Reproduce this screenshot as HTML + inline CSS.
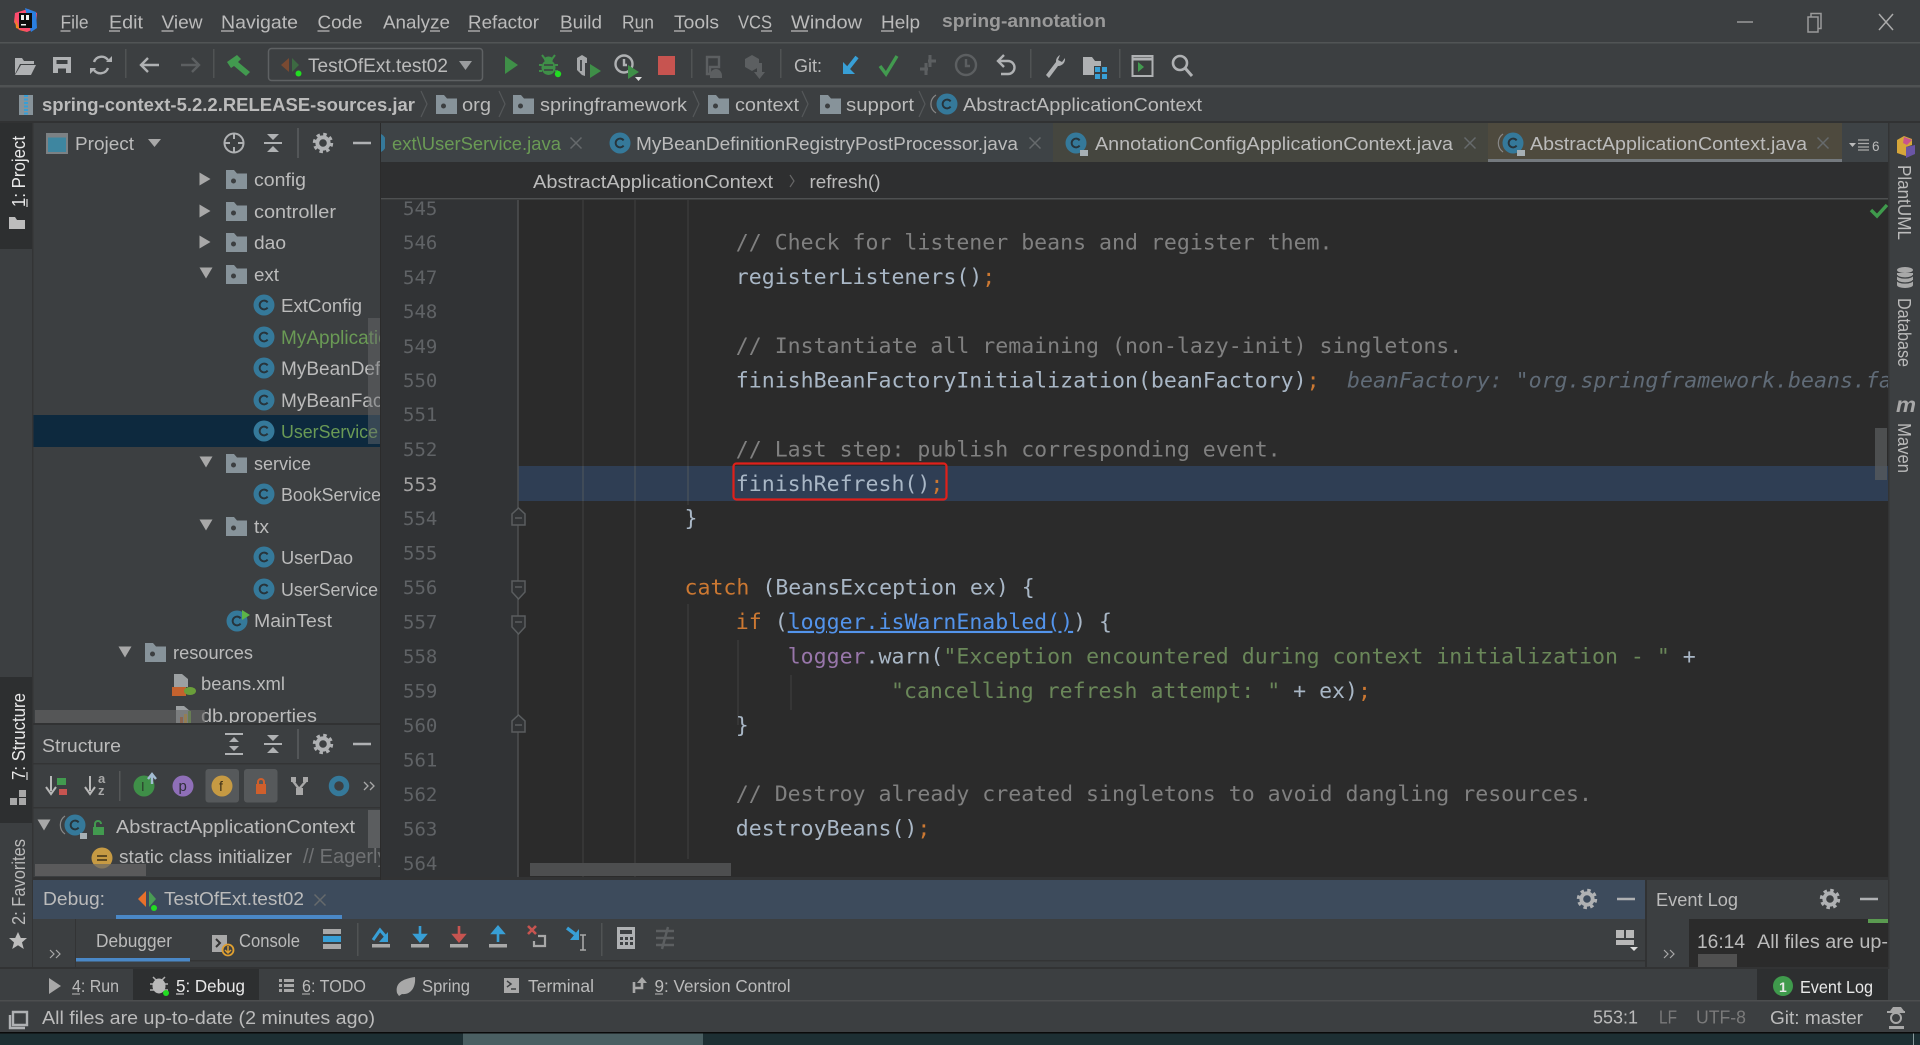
<!DOCTYPE html>
<html><head><meta charset="utf-8"><title>spring-annotation</title>
<style>
html,body{margin:0;padding:0;background:#3c3f41;overflow:hidden}
svg{display:block}
text{font-family:"Liberation Sans",sans-serif;font-size:18.5px;fill:#bbbbbb;white-space:pre}
.b{font-weight:bold}
.g{fill:#6a9a55}
.w{fill:#e8e8e8}
.d{fill:#7a7a7a}
.m{font-family:"DejaVu Sans Mono",monospace;font-size:21.55px;fill:#a9b7c6}
.n{font-family:"DejaVu Sans Mono",monospace;font-size:19px;fill:#606366}
.c{fill:#808080}.k{fill:#cc7832}.s{fill:#6a8759}.p{fill:#9876aa}.l{fill:#5394ec;text-decoration:underline}
.h{font-style:italic;fill:#606b77}
.ic{fill:none;stroke:#afb1b3;stroke-width:2.4}
.dim{fill:none;stroke:#5c5f61;stroke-width:2.4}
</style></head>
<body>
<svg xmlns="http://www.w3.org/2000/svg" width="1920" height="1045" viewBox="0 0 1920 1045">
<defs>
<g id="cls"><circle r="10.5" fill="#35799a"/><path d="M3.6-2.6A4.4 4.4 0 1 0 3.6 2.6" fill="none" stroke="#27343b" stroke-width="1.9"/></g>
<g id="fld"><path d="M-11-10h8l3 3.500h10v15.500h-21z" fill="#87939a"/><circle cx="-3.500" cy="1" r="2.500" fill="#3c3f41"/></g>
<g id="gear"><circle r="8.500" fill="none" stroke="#afb1b3" stroke-width="3.400" stroke-dasharray="3.400 3.270"/><circle r="5.700" fill="none" stroke="#afb1b3" stroke-width="3.800"/></g>
<path id="min" d="M-9 0h18" stroke="#afb1b3" stroke-width="2.400"/>
<g id="coll"><path d="M-9 0h18" stroke="#afb1b3" stroke-width="2"/><path d="M-6-9h12l-6 6zM-6 9h12l-6-6z" fill="#afb1b3"/></g>
<path id="x" d="M-5.500-5.500l11 11M5.500-5.500l-11 11" stroke="#666a6c" stroke-width="1.500" fill="none"/>
<path id="triR" d="M-5.500-6.500l11 6.500-11 6.500z" fill="#a8a8a8"/>
<path id="triD" d="M-6.500-5.500h13l-6.500 11z" fill="#a8a8a8"/>
<path id="chev" d="M-3-13l6 13-6 13" fill="none" stroke="#55585a" stroke-width="1.200"/>
</defs>

<rect width="1920" height="1045" fill="#3c3f41"/>

<!-- Title bar -->
<path d="M15 13l13-4 9 4-1 15-9 4-8-2-5-8z" fill="#fb4b6e"/><path d="M25 8l11 4 1 16-6 4z" fill="#2a7fe0"/><path d="M15 18l5 12 8 2-12-4z" fill="#f0861c"/>
<rect x="19" y="13" width="13" height="15" fill="#0c0c0c"/><path d="M21 15h3v5h-3zM26 15h3v5h-3zM21 24h5v1.500h-5z" fill="#f0f0f0"/>
<text x="60.500" y="28.500" textLength="28" lengthAdjust="spacingAndGlyphs">File</text>
<text x="109" y="28.500" textLength="34" lengthAdjust="spacingAndGlyphs">Edit</text>
<text x="161.500" y="28.500" textLength="41" lengthAdjust="spacingAndGlyphs">View</text>
<text x="221" y="28.500" textLength="77" lengthAdjust="spacingAndGlyphs">Navigate</text>
<text x="317.500" y="28.500" textLength="45" lengthAdjust="spacingAndGlyphs">Code</text>
<text x="383" y="28.500" textLength="67" lengthAdjust="spacingAndGlyphs">Analyze</text>
<text x="468" y="28.500" textLength="71" lengthAdjust="spacingAndGlyphs">Refactor</text>
<text x="560" y="28.500" textLength="42" lengthAdjust="spacingAndGlyphs">Build</text>
<text x="622" y="28.500" textLength="32" lengthAdjust="spacingAndGlyphs">Run</text>
<text x="674" y="28.500" textLength="45" lengthAdjust="spacingAndGlyphs">Tools</text>
<text x="738" y="28.500" textLength="34" lengthAdjust="spacingAndGlyphs">VCS</text>
<text x="791" y="28.500" textLength="71" lengthAdjust="spacingAndGlyphs">Window</text>
<text x="881" y="28.500" textLength="39" lengthAdjust="spacingAndGlyphs">Help</text>
<path d="M60.500 31h10M109 31h11M161.500 31h12M221 31h13M317.500 31h12M430 31h10M468 31h12M560 31h12M634 31h9M674 31h11M761 31h11M791 31h17M881 31h13" stroke="#bbb" stroke-width="1.200"/>
<text class="b" x="942" y="27" textLength="164" lengthAdjust="spacingAndGlyphs" style="fill:#9a9a9a">spring-annotation</text>
<path d="M1737 22h16" stroke="#9a9a9a" stroke-width="1.500"/>
<path d="M1808 17h10v15h-10zM1811 17v-3.500h10v15h-3" fill="none" stroke="#9a9a9a" stroke-width="1.500"/>
<path d="M1879 14l14 16M1893 14l-14 16" stroke="#aaa" stroke-width="1.500"/>
<rect y="42" width="1920" height="1.500" fill="#515455"/>

<!-- Toolbar -->
<path d="M15 58h7l2 3h10v3H20l-5 10zM21 65h15l-5 10H15z" fill="#afb1b3"/>
<path d="M53 57h18v16H53z" fill="#afb1b3"/><path d="M56.500 60h11v4h-11zM58 68.500h8v4.500h-8z" fill="#3c3f41"/>
<path d="M94 62a8 8 0 0 1 14-2M108 68a8 8 0 0 1-14 2" class="ic" stroke-width="3"/><path d="M106 62h6v-6zM96 68h-6v6z" fill="#afb1b3"/>
<rect x="125" y="49" width="1.500" height="29" fill="#505354"/>
<path d="M141 65h18M148 58l-7 7 7 7" class="ic" stroke-width="2.600"/>
<path d="M181 65h18M192 58l7 7-7 7" class="dim" stroke-width="2.600"/>
<rect x="213" y="49" width="1.500" height="29" fill="#505354"/>
<path d="M227 62l10-7 4 4-3 3 12 10-4 4-12-10-3 2z" fill="#429a4f"/>
<rect x="268.500" y="48.500" width="214" height="32" rx="3" fill="#3c3f41" stroke="#5e6163" stroke-width="1.500"/>
<path d="M289 58v14l-8-7z" fill="#794a32"/><path d="M292 58v14l7-7z" fill="#3d6a42"/><circle cx="298.500" cy="73.500" r="3" fill="#22dd22"/>
<text x="308" y="72" textLength="140" lengthAdjust="spacingAndGlyphs" style="font-size:19.500px">TestOfExt.test02</text>
<path d="M459 61h13l-6.500 9z" fill="#9a9c9e"/>
<path d="M505 56l13 9-13 9z" fill="#3f8f48"/>
<path d="M542 55l3 4M555 55l-3 4M539 65h3M555 65h3M539 71h3M555 71h3" stroke="#3f8f48" stroke-width="2" fill="none"/><ellipse cx="548.500" cy="59.500" rx="4.500" ry="3" fill="#3f8f48"/><ellipse cx="548.500" cy="67.500" rx="7" ry="7.500" fill="#3f8f48"/><path d="M544 65h9M544 70h9" stroke="#3c3f41" stroke-width="1.400"/><circle cx="558" cy="74" r="3.200" fill="#22dd22"/>
<path d="M577 58l5-3 5 3v5h-2v13l-3-1-5-5z" fill="#a6a8aa"/><path d="M581 60v11" stroke="#3c3f41" stroke-width="1.800"/><path d="M590 64l11 7-11 7z" fill="#3f8f48"/>
<circle cx="624" cy="64" r="8.500" class="ic"/><path d="M624 59v6h3" class="ic" stroke-width="1.600"/><path d="M628 65l11 7-11 7z" fill="#3f8f48"/><path d="M635 77h7l-3.500 4z" fill="#ddd"/>
<rect x="658" y="56" width="17" height="19" fill="#c75450"/>
<rect x="691" y="49" width="1.500" height="29" fill="#505354"/>
<path d="M707 57h12v10h-9v7h-3z" class="dim" stroke-width="2"/><path d="M710 76a6 7 0 0 1 12 0v2h-12z" fill="#5c5f61"/>
<path d="M745 59l7-4 7 4v8l-7 4-7-4z" fill="#5c5f61"/><path d="M757 63h5v9h3l-5.500 7-5.500-7h3z" fill="#5c5f61"/>
<rect x="780" y="49" width="1.500" height="29" fill="#505354"/>
<text x="794" y="72" textLength="28" lengthAdjust="spacingAndGlyphs">Git:</text>
<path d="M857 57L846 71" stroke="#389fd6" stroke-width="4"/><path d="M843 62v12h12z" fill="#389fd6"/>
<path d="M880 66l6 8 11-18" fill="none" stroke="#429a4f" stroke-width="3.400"/>
<path d="M920 69h8M926 63v12M936 61h-8M930 55v12" stroke="#5c5f61" stroke-width="3" fill="none"/>
<circle cx="966" cy="65" r="10" class="dim"/><path d="M966 59v7h4" class="dim" stroke-width="2"/>
<path d="M999 61h9a6.500 6.500 0 0 1 0 13h-7M1004 55l-6 6 6 6" class="ic" stroke-width="2.600"/>
<rect x="1030" y="49" width="1.500" height="29" fill="#505354"/>
<path d="M1046 75l10-13a7 7 0 0 1 4-7l-2 5 4 2 3-4a7 7 0 0 1-7 8l-9 12z" fill="#afb1b3"/>
<path d="M1083 57h9l3 4h6v5h-7v9h-11z" fill="#afb1b3"/><path d="M1095 67h5v5h-5zM1102 67h5v5h-5zM1095 74h5v5h-5zM1102 74h5v5h-5z" fill="#389fd6"/>
<rect x="1119" y="49" width="1.500" height="29" fill="#505354"/>
<rect x="1132.500" y="56" width="20" height="20" fill="#3a3d3e" stroke="#afb1b3" stroke-width="2"/><path d="M1133 59h19" stroke="#afb1b3" stroke-width="3"/><path d="M1138 62l6 5-6 5z" fill="#429a4f"/>
<circle cx="1180" cy="63" r="7" fill="none" stroke="#afb1b3" stroke-width="2.600"/><path d="M1185 68l7 8" stroke="#afb1b3" stroke-width="3"/>
<rect y="85" width="1920" height="2.500" fill="#4f5253"/>

<!-- Nav bar -->
<rect x="19" y="95" width="14" height="20" fill="#87939a"/><path d="M26 95v20" stroke="#389fd6" stroke-width="4" stroke-dasharray="2 1.500"/>
<text class="b" x="42" y="111" textLength="373" lengthAdjust="spacingAndGlyphs">spring-context-5.2.2.RELEASE-sources.jar</text>
<use href="#chev" x="424" y="104"/>
<use href="#fld" x="447" y="105"/><text x="462" y="111" textLength="29" lengthAdjust="spacingAndGlyphs">org</text>
<use href="#chev" x="502" y="104"/>
<use href="#fld" x="524" y="105"/><text x="540" y="111" textLength="147" lengthAdjust="spacingAndGlyphs">springframework</text>
<use href="#chev" x="696" y="104"/>
<use href="#fld" x="719" y="105"/><text x="735" y="111" textLength="64" lengthAdjust="spacingAndGlyphs">context</text>
<use href="#chev" x="805" y="104"/>
<use href="#fld" x="831" y="105"/><text x="846" y="111" textLength="68" lengthAdjust="spacingAndGlyphs">support</text>
<use href="#chev" x="922" y="104"/>
<use href="#cls" x="947" y="104"/><path d="M936 95a12 11 0 0 0 0 18" fill="none" stroke="#888" stroke-width="1.200"/>
<text x="963" y="111" textLength="239" lengthAdjust="spacingAndGlyphs">AbstractApplicationContext</text>
<rect y="121" width="1920" height="2.500" fill="#313233"/>

<!-- Project panel -->
<rect x="33" y="123" width="348" height="602" fill="#3c3f41"/>
<rect x="47" y="134" width="20" height="19" fill="#3e86a0" stroke="#7c8184" stroke-width="2"/><path d="M47 136h20" stroke="#7c8184" stroke-width="3"/>
<text x="75" y="150" textLength="59" lengthAdjust="spacingAndGlyphs">Project</text>
<path d="M148 139h13l-6.500 8z" fill="#a8a8a8"/>
<circle cx="234" cy="143" r="9.500" fill="none" stroke="#afb1b3" stroke-width="2"/><path d="M224 143h6M238 143h6M234 133v6M234 147v6" stroke="#afb1b3" stroke-width="2"/>
<use href="#coll" x="273" y="143"/><rect x="297" y="128" width="2" height="30" fill="#535658"/>
<use href="#gear" x="323" y="143"/><use href="#min" x="362" y="143"/>

<rect x="33" y="415" width="347" height="32" fill="#0d293e"/>

<use href="#triR" x="205" y="179"/><use href="#fld" x="237" y="180"/><text x="254" y="186" textLength="52" lengthAdjust="spacingAndGlyphs">config</text>
<use href="#triR" x="205" y="211"/><use href="#fld" x="237" y="212"/><text x="254" y="218" textLength="82" lengthAdjust="spacingAndGlyphs">controller</text>
<use href="#triR" x="205" y="242"/><use href="#fld" x="237" y="243"/><text x="254" y="249" textLength="32" lengthAdjust="spacingAndGlyphs">dao</text>
<use href="#triD" x="206" y="273"/><use href="#fld" x="237" y="275"/><text x="254" y="281" textLength="25" lengthAdjust="spacingAndGlyphs">ext</text>
<use href="#cls" x="264" y="305"/><text x="281" y="312" textLength="81" lengthAdjust="spacingAndGlyphs">ExtConfig</text>
<use href="#cls" x="264" y="337"/><text class="g" x="281" y="344" style="font-size:19px">MyApplicationContext</text>
<use href="#cls" x="264" y="368"/><text x="281" y="375" style="font-size:19px">MyBeanDefinitionReg</text>
<use href="#cls" x="264" y="400"/><text x="281" y="407" style="font-size:19px">MyBeanFactoryPostPr</text>
<use href="#cls" x="264" y="431"/><text class="g" x="281" y="438" textLength="97" lengthAdjust="spacingAndGlyphs">UserService</text>
<use href="#triD" x="206" y="462"/><use href="#fld" x="237" y="464"/><text x="254" y="470" textLength="57" lengthAdjust="spacingAndGlyphs">service</text>
<use href="#cls" x="264" y="494"/><text x="281" y="501" textLength="100" lengthAdjust="spacingAndGlyphs">BookService</text>
<use href="#triD" x="206" y="525"/><use href="#fld" x="237" y="527"/><text x="254" y="533" textLength="15" lengthAdjust="spacingAndGlyphs">tx</text>
<use href="#cls" x="264" y="557"/><text x="281" y="564" textLength="72" lengthAdjust="spacingAndGlyphs">UserDao</text>
<use href="#cls" x="264" y="589"/><text x="281" y="596" textLength="97" lengthAdjust="spacingAndGlyphs">UserService</text>
<use href="#cls" x="237" y="621"/><path d="M242 610l8 5-8 5z" fill="#5cb547"/><text x="254" y="627" textLength="78" lengthAdjust="spacingAndGlyphs">MainTest</text>
<use href="#triD" x="125" y="652"/><use href="#fld" x="156" y="653"/><text x="173" y="659" textLength="80" lengthAdjust="spacingAndGlyphs">resources</text>
<path d="M174 674h8l6 5v8h-14z" fill="#9ca0a2"/><rect x="172" y="687" width="14" height="9" fill="#c4622e"/><ellipse cx="190" cy="691" rx="6" ry="4" fill="#6a9e3a"/>
<text x="201" y="690" textLength="84" lengthAdjust="spacingAndGlyphs">beans.xml</text>
<path d="M176 706h8l6 5v13h-14z" fill="#9ca0a2"/><path d="M180 717h3v7h-3z" fill="#c4622e"/><path d="M184 714h3v10h-3z" fill="#d9a43a"/><path d="M188 711h3v13h-3z" fill="#6a9e3a"/>
<text x="201" y="722" textLength="116" lengthAdjust="spacingAndGlyphs">db.properties</text>
<rect x="368" y="318" width="12" height="126" fill="#6b6d6e" fill-opacity=".45"/>
<rect x="35" y="710" width="170" height="13" fill="#666" fill-opacity=".6"/>

<!-- Structure panel -->
<rect x="33" y="723" width="348" height="155" fill="#3c3f41"/>
<rect x="33" y="723" width="348" height="2" fill="#313233"/>
<text x="42" y="752" textLength="79" lengthAdjust="spacingAndGlyphs">Structure</text>
<path d="M225 734h18M225 754h18" stroke="#afb1b3" stroke-width="2"/><path d="M229 742l5-5 5 5zM229 746l5 5 5-5z" fill="#afb1b3"/>
<use href="#coll" x="273" y="744"/><rect x="297" y="729" width="2" height="30" fill="#535658"/>
<use href="#gear" x="323" y="744"/><use href="#min" x="362" y="744"/>
<rect x="33" y="763" width="348" height="1.500" fill="#333435"/>
<path d="M51 776v15M46 787l5 7 5-7" stroke="#b8b8b8" stroke-width="2" fill="none"/><path d="M57 778h9v7h-9z" fill="#429a4f"/><rect x="59" y="789" width="8" height="6" fill="#c75450"/>
<path d="M90 776v15M85 787l5 7 5-7" stroke="#b8b8b8" stroke-width="2" fill="none"/>
<text x="98" y="783" style="font-size:13px;font-weight:bold;fill:#a8a8a8">a</text><text x="98" y="795" style="font-size:13px;font-weight:bold;fill:#a8a8a8">z</text>
<rect x="119" y="771" width="1.500" height="30" fill="#555758"/>
<circle cx="144" cy="786" r="10.500" fill="#3f8f48"/><text x="141" y="791" style="font-size:13px;fill:#2b3a2b">I</text><path d="M152 784v-9M148 779l4-5 4 5" stroke="#a3bcd2" stroke-width="2.400" fill="none"/>
<circle cx="183" cy="786" r="10.500" fill="#8f6fb8"/><text x="178.500" y="791" style="font-size:15px;fill:#2f2f3a">p</text>
<rect x="205.500" y="769" width="33.500" height="33.500" rx="3" fill="#56595b"/>
<circle cx="222" cy="786" r="10.500" fill="#c69a43"/><text x="219" y="791" style="font-size:14px;fill:#3b2f18">f</text>
<rect x="244" y="769" width="33.500" height="33.500" rx="3" fill="#56595b"/>
<path d="M256 784h10v10h-10z" fill="#cf5f2c"/><path d="M258 784v-2a3 3 0 0 1 6 0v2" stroke="#cf5f2c" stroke-width="2" fill="none"/>
<path d="M291 777h5v5h-5zM303 777h5v5h-5zM296 788h7v7h-7z" fill="#a8a8a8"/><path d="M293 781l6 8 7-8" stroke="#a8a8a8" stroke-width="2.400" fill="none"/>
<circle cx="339" cy="786" r="7.500" fill="none" stroke="#35799a" stroke-width="5.500"/>
<path d="M364 782l4 4-4 4M370 782l4 4-4 4" fill="none" stroke="#a8a8a8" stroke-width="1.300"/>
<rect x="33" y="807" width="348" height="1.500" fill="#333435"/>
<use href="#triD" x="44" y="825"/><use href="#cls" x="75" y="825"/><path d="M65 816a11 11 0 0 0 0 18" fill="none" stroke="#888" stroke-width="1.200"/><rect x="80" y="833" width="7" height="6" fill="#a7b0b5"/>
<path d="M93 827h11v8H93z" fill="#429a4f"/><path d="M95 827v-3a3 3 0 0 1 6 0" stroke="#429a4f" stroke-width="2" fill="none"/>
<text x="116" y="833" textLength="239" lengthAdjust="spacingAndGlyphs">AbstractApplicationContext</text>
<circle cx="102" cy="858" r="10.500" fill="#c69a43"/><path d="M97 856h10M97 860h10" stroke="#3b2f18" stroke-width="1.500"/>
<text x="119" y="863" textLength="173" lengthAdjust="spacingAndGlyphs">static class initializer</text>
<text class="d" x="303" y="863" style="font-size:20px;fill:#707274">// Eagerly check</text>
<rect x="368" y="810" width="12" height="38" fill="#66686a" fill-opacity=".75"/>
<rect x="35" y="864" width="111" height="12" fill="#666" fill-opacity=".7"/>
<rect x="33" y="877" width="348" height="3" fill="#313233"/>

<!-- Editor -->
<rect x="380" y="123" width="1508" height="757" fill="#2b2b2b"/>
<rect x="381" y="123" width="1507" height="39" fill="#3e4346"/>
<rect x="1053" y="123" width="435" height="39" fill="#45463f"/>
<rect x="1488" y="123" width="354" height="36" fill="#4e4a3e"/>
<rect x="1488" y="159" width="354" height="4" fill="#74797e"/>
<path d="M381 134a10 10 0 0 1 0 18z" fill="#35799a"/><rect x="385" y="133" width="5" height="20" fill="#3e4346"/>
<text class="g" x="392" y="150" textLength="169" lengthAdjust="spacingAndGlyphs">ext\UserService.java</text>
<use href="#x" x="576" y="143"/>
<use href="#cls" x="620" y="143"/>
<text x="636" y="150" textLength="382" lengthAdjust="spacingAndGlyphs">MyBeanDefinitionRegistryPostProcessor.java</text>
<use href="#x" x="1035" y="143"/>
<use href="#cls" x="1076" y="143"/><rect x="1080" y="150" width="8" height="6" fill="#a7b0b5"/>
<text x="1095" y="150" textLength="358" lengthAdjust="spacingAndGlyphs">AnnotationConfigApplicationContext.java</text>
<use href="#x" x="1470" y="143"/>
<use href="#cls" x="1513" y="143"/><path d="M1503 134a11 11 0 0 0 0 18" fill="none" stroke="#888" stroke-width="1.200"/><rect x="1517" y="150" width="8" height="6" fill="#a7b0b5"/>
<text x="1530" y="150" textLength="277" lengthAdjust="spacingAndGlyphs">AbstractApplicationContext.java</text>
<use href="#x" x="1823" y="143"/>
<path d="M1849 143h7l-3.500 4z" fill="#bbb"/><path d="M1858 140h11M1858 143.500h11M1858 147h11M1858 150h11" stroke="#aaa" stroke-width="1.300"/>
<text x="1872" y="151" style="font-size:13.500px">6</text>

<rect x="381" y="162" width="1507" height="36" fill="#2e2f30"/>
<text x="533" y="188" textLength="240" lengthAdjust="spacingAndGlyphs">AbstractApplicationContext</text>
<path d="M790 175l4 6-4 6" fill="none" stroke="#666" stroke-width="1.200"/>
<text x="809.500" y="188" textLength="71" lengthAdjust="spacingAndGlyphs">refresh()</text>
<rect x="381" y="198" width="1507" height="1.500" fill="#4e5051"/>

<rect x="381" y="200" width="137" height="677" fill="#313335"/>
<rect x="518" y="466" width="1370" height="35" fill="#2f3e54"/>
<path d="M518 200v677" stroke="#4e5051" stroke-width="1.500"/>
<path d="M583 200v677M635 200v677M688 200v305M688 604v255M738 640v85M791 675v35" stroke="#3b3b3b" stroke-width="1.500"/>
<path d="M583 466v35M635 466v35M688 466v35" stroke="#44505f" stroke-width="1.500"/>
<g fill="#313335" stroke="#5a5d5f" stroke-width="1.500">
<path d="M512 525v-11l6.500-6 6.500 6v11z"/><path d="M512 581v11l6.500 7 6.500-7v-11z"/><path d="M512 616v11l6.500 7 6.500-7v-11z"/><path d="M512 732v-11l6.500-6 6.500 6v11z"/>
</g>
<path d="M515 518h7M515 587h7M515 622h7M515 725h7" stroke="#5a5d5f" stroke-width="1.500"/>

<text class="n" x="403" y="215">545</text>
<text class="n" x="403" y="249">546</text>
<text class="n" x="403" y="284">547</text>
<text class="n" x="403" y="318">548</text>
<text class="n" x="403" y="353">549</text>
<text class="n" x="403" y="387">550</text>
<text class="n" x="403" y="421">551</text>
<text class="n" x="403" y="456">552</text>
<text class="n" x="403" y="491" style="fill:#a4a3a3">553</text>
<text class="n" x="403" y="525">554</text>
<text class="n" x="403" y="559.500">555</text>
<text class="n" x="403" y="594">556</text>
<text class="n" x="403" y="628.500">557</text>
<text class="n" x="403" y="663">558</text>
<text class="n" x="403" y="697.500">559</text>
<text class="n" x="403" y="732">560</text>
<text class="n" x="403" y="766.500">561</text>
<text class="n" x="403" y="801">562</text>
<text class="n" x="403" y="835.500">563</text>
<text class="n" x="403" y="870">564</text>

<text class="m c" x="735.800" y="249.700">// Check for listener beans and register them.</text>
<text class="m" x="735.800" y="284.200">registerListeners()<tspan class="k">;</tspan></text>
<text class="m c" x="735.800" y="353.100">// Instantiate all remaining (non-lazy-init) singletons.</text>
<text class="m" x="735.800" y="387.600">finishBeanFactoryInitialization(beanFactory)<tspan class="k">;</tspan></text>
<text class="m h" x="1347" y="387.600">beanFactory: "org.springframework.beans.factory.support.Defa</text>
<text class="m c" x="735.800" y="456.500">// Last step: publish corresponding event.</text>
<text class="m" x="735.800" y="491">finishRefresh()<tspan class="k">;</tspan></text>
<rect x="733.500" y="463.500" width="213" height="36" rx="3" fill="none" stroke="#e0201a" stroke-width="2.200"/>
<text class="m" x="684.500" y="525.500">}</text>
<text class="m" x="684.500" y="594.400"><tspan class="k">catch</tspan> (BeansException ex) {</text>
<text class="m" x="735.800" y="628.900"><tspan class="k">if</tspan> (<tspan class="l">logger.isWarnEnabled()</tspan>) {</text>
<text class="m" x="787.700" y="663.400"><tspan class="p">logger</tspan>.warn(<tspan class="s">"Exception encountered during context initialization - "</tspan> +</text>
<text class="m" x="891" y="697.900"><tspan class="s">"cancelling refresh attempt: "</tspan> + ex)<tspan class="k">;</tspan></text>
<text class="m" x="735.800" y="732.300">}</text>
<text class="m c" x="735.800" y="801.200">// Destroy already created singletons to avoid dangling resources.</text>
<text class="m" x="735.800" y="835.700">destroyBeans()<tspan class="k">;</tspan></text>

<path d="M1871 210l6 6 10-11" fill="none" stroke="#3f9a4c" stroke-width="3.400"/>
<rect x="1875" y="428" width="12" height="52" fill="#5a5c5d" fill-opacity=".75"/>
<rect x="530" y="863" width="201" height="13" fill="#4d4e4f"/>
<rect x="381" y="877" width="1507" height="3" fill="#323334"/>

<!-- Right strip -->
<rect x="1888" y="123" width="32" height="910" fill="#3c3f41"/>
<rect x="1888" y="123" width="1.500" height="846" fill="#333435"/>
<path d="M1897 140l7-4 8 3v6l-6 2v9l-9-3z" fill="#d6a63a"/><path d="M1904 137l8 3-5 5-4-2z" fill="#c9548e"/><path d="M1906 147l9-2v9l-9 4z" fill="#6a55a5"/>
<text transform="translate(1898,165) rotate(90)" textLength="75" lengthAdjust="spacingAndGlyphs" style="font-size:18.500px">PlantUML</text>
<ellipse cx="1905" cy="270" rx="8" ry="3" fill="#a8a8a8"/><path d="M1897 273v12a8 3 0 0 0 16 0v-12" fill="#a8a8a8"/><path d="M1897 275a8 3 0 0 0 16 0M1897 280a8 3 0 0 0 16 0" stroke="#3c3f41" stroke-width="1.300" fill="none"/>
<text transform="translate(1898,298) rotate(90)" textLength="69" lengthAdjust="spacingAndGlyphs" style="font-size:18.500px">Database</text>
<text x="1896" y="412" textLength="20" lengthAdjust="spacingAndGlyphs" style="font-size:21px;font-weight:bold;font-style:italic;fill:#a8a8a8">m</text>
<text transform="translate(1898,423) rotate(90)" textLength="50" lengthAdjust="spacingAndGlyphs" style="font-size:18.500px">Maven</text>

<!-- Left strip -->
<rect x="0" y="123" width="32" height="846" fill="#3c3f41"/>
<rect x="32" y="123" width="1.500" height="846" fill="#333435"/>
<rect x="0" y="123" width="32" height="126" fill="#2d2f30"/>
<path d="M9 217h6l2 3h8v9H9z" fill="#bdbdbd"/>
<text class="w" transform="translate(25,207) rotate(-90)" textLength="71" lengthAdjust="spacingAndGlyphs" style="font-size:18.500px">1: Project</text>
<path d="M27 199v8" stroke="#ddd" stroke-width="1.200"/>
<rect x="0" y="677" width="32" height="146" fill="#2d2f30"/>
<path d="M10 798h7v7h-7zM19 798h7v7h-7zM19 790h7v7h-7z" fill="#a8a8a8"/>
<text class="w" transform="translate(25,780) rotate(-90)" textLength="87" lengthAdjust="spacingAndGlyphs" style="font-size:18.500px">7: Structure</text>
<path d="M27 772v8" stroke="#ddd" stroke-width="1.200"/>
<text transform="translate(25,925) rotate(-90)" textLength="86" lengthAdjust="spacingAndGlyphs" style="font-size:18.500px">2: Favorites</text>
<path d="M18 932l2.800 6h6.200l-5 4.400 1.800 6.600-5.800-3.700-5.800 3.700 1.800-6.600-5-4.400h6.200z" fill="#bdbdbd"/>

<!-- Debug -->
<rect x="33" y="880" width="1612" height="39" fill="#3d4b5c"/>
<text x="43" y="905" textLength="62" lengthAdjust="spacingAndGlyphs">Debug:</text>
<path d="M146 891v16l-8-8z" fill="#e8702a"/><path d="M149 891v16l7-8z" fill="#499c54"/><circle cx="154" cy="908" r="3" fill="#22dd22"/>
<text x="164" y="905" textLength="140" lengthAdjust="spacingAndGlyphs">TestOfExt.test02</text>
<use href="#x" x="320" y="900"/>
<rect x="116" y="915" width="226" height="4" fill="#4a88c7"/>
<use href="#gear" x="1587" y="899"/><use href="#min" x="1626" y="899"/>
<rect x="1645" y="880" width="2" height="89" fill="#313233"/>
<text x="1656" y="906" textLength="82" lengthAdjust="spacingAndGlyphs">Event Log</text>
<use href="#gear" x="1830" y="899"/><use href="#min" x="1869" y="899"/>

<rect x="33" y="919" width="1612" height="48" fill="#3c3f41"/>
<rect x="75" y="919" width="1" height="48" fill="#333435"/>
<rect x="75" y="960" width="1570" height="1.500" fill="#333435"/>
<rect x="76" y="958" width="114" height="3.500" fill="#4a88c7"/>
<path d="M50 950l4 4-4 4M56 950l4 4-4 4" fill="none" stroke="#a8a8a8" stroke-width="1.200"/>
<text x="96" y="947" textLength="76" lengthAdjust="spacingAndGlyphs">Debugger</text>
<rect x="212" y="935" width="15" height="17" fill="#a8a8a8"/><path d="M216 939l4 4-4 4" fill="none" stroke="#333" stroke-width="2"/><circle cx="228" cy="950" r="5.500" fill="#3c3f41" stroke="#e0a030" stroke-width="1.800"/><path d="M228 946v7M225 950l3 3 3-3" stroke="#e0a030" stroke-width="1.500" fill="none"/>
<text x="239" y="947" textLength="61" lengthAdjust="spacingAndGlyphs">Console</text>
<g transform="translate(0,-2)">
<rect x="323" y="931" width="18" height="5" fill="#a8a8a8"/><rect x="323" y="938" width="18" height="6" fill="#389fd6"/><rect x="323" y="946" width="18" height="5" fill="#a8a8a8"/>
<path d="M373 942l7-10 6 7" fill="none" stroke="#389fd6" stroke-width="3"/><path d="M388 934v10h-9z" fill="#389fd6"/><rect x="372" y="946" width="18" height="3.500" fill="#a8a8a8"/>
<path d="M420 928v12M415 937l5 6 5-6z" stroke="#389fd6" stroke-width="2.600" fill="#389fd6"/><rect x="411" y="946" width="18" height="3.500" fill="#a8a8a8"/>
<path d="M459 928v12M454 937l5 6 5-6z" stroke="#c75450" stroke-width="2.600" fill="#c75450"/><rect x="450" y="946" width="18" height="3.500" fill="#a8a8a8"/>
<path d="M498 944v-12M493 935l5-6 5 6z" stroke="#389fd6" stroke-width="2.600" fill="#389fd6"/><rect x="489" y="946" width="18" height="3.500" fill="#a8a8a8"/>
<path d="M528 928l8 8M536 928l-8 8" stroke="#c75450" stroke-width="2.600"/><path d="M538 938h7v10h-11v-5" fill="none" stroke="#a8a8a8" stroke-width="2.200"/>
<path d="M567 930l8 6" stroke="#389fd6" stroke-width="3.400"/><path d="M579 931v11h-9z" fill="#389fd6"/><path d="M583 937v15M580 937h6M580 952h6" stroke="#a8a8a8" stroke-width="1.600"/>
<rect x="617" y="929" width="18" height="22" fill="#afb1b3"/><path d="M620 932h12v4h-12zM620 939h3v3h-3zM625 939h3v3h-3zM630 939h3v3h-3zM620 944h3v3h-3zM625 944h3v3h-3zM630 944h3v3h-3z" fill="#3c3f41"/>
<path d="M656 933h18M656 940h18M656 947h18M668 929l-6 22" stroke="#5c5f61" stroke-width="2.400" fill="none"/>
</g>
<rect x="357" y="923" width="1.500" height="33" fill="#505354"/>
<rect x="601" y="923" width="1.500" height="33" fill="#505354"/>
<path d="M1616 930h8v8h-8zM1626 930h8v8h-8zM1616 940h18v5h-18z" fill="#b8b8b8"/><path d="M1630 947h8l-4 4z" fill="#ddd"/>

<rect x="1647" y="919" width="241" height="48" fill="#3c3f41"/>
<rect x="1689" y="919" width="199" height="48" fill="#2b2b2b"/>
<rect x="1868" y="919" width="20" height="4" fill="#5a9a50"/>
<path d="M1664 950l4 4-4 4M1670 950l4 4-4 4" fill="none" stroke="#a8a8a8" stroke-width="1.200"/>
<text x="1697" y="948" textLength="48" lengthAdjust="spacingAndGlyphs" style="font-size:19px">16:14</text>
<text x="1757" y="948" textLength="131" lengthAdjust="spacingAndGlyphs" style="font-size:19px">All files are up-</text>
<rect x="1698" y="954" width="39" height="13" fill="#505050"/>
<rect x="33" y="967" width="1855" height="2" fill="#323334"/>

<!-- Tool window bar -->
<rect x="0" y="967" width="1888" height="2" fill="#323334"/>
<rect y="969" width="1920" height="31" fill="#3c3f41"/>
<path d="M49 978l12 8-12 8z" fill="#a8a8a8"/>
<text x="72" y="992" textLength="47" lengthAdjust="spacingAndGlyphs" style="font-size:17.500px">4: Run</text><path d="M72 994h8" stroke="#bbb"/>
<rect x="133" y="969" width="126" height="31" fill="#2d2f30"/>
<path d="M153 977l3 3h6l3-3M150 984h4M164 984h4M150 990h4M164 990h4" stroke="#b0b0b0" stroke-width="1.500" fill="none"/><ellipse cx="159" cy="986" rx="6.500" ry="7.500" fill="#b8b8b8"/><circle cx="166" cy="993" r="3" fill="#22dd22"/>
<text class="w" x="176" y="992" textLength="69" lengthAdjust="spacingAndGlyphs" style="font-size:17.500px">5: Debug</text><path d="M176 994h8" stroke="#eee"/>
<path d="M279 979h3v3h-3zM279 984h3v3h-3zM279 989h3v3h-3zM284 979h10v3h-10zM284 984h10v3h-10zM284 989h10v3h-10z" fill="#a8a8a8"/>
<text x="302" y="992" textLength="64" lengthAdjust="spacingAndGlyphs" style="font-size:17.500px">6: TODO</text><path d="M302 994h8" stroke="#bbb"/>
<path d="M397 993c-2-9 4-14 18-16 1 10-4 18-13 17l-3 2z" fill="#a8a8a8"/>
<text x="422" y="992" textLength="48" lengthAdjust="spacingAndGlyphs" style="font-size:17.500px">Spring</text>
<rect x="504" y="978" width="15" height="15" fill="#a8a8a8"/><path d="M507 981l4 3-4 3M511 989h5" stroke="#3c3f41" stroke-width="1.500" fill="none"/>
<text x="528" y="992" textLength="66" lengthAdjust="spacingAndGlyphs" style="font-size:17.500px">Terminal</text>
<path d="M634 993v-11M634 988h8v-6" stroke="#a8a8a8" stroke-width="2.600" fill="none"/><path d="M637 983l5-6 5 6z" fill="#a8a8a8"/>
<text x="654.500" y="992" textLength="136" lengthAdjust="spacingAndGlyphs" style="font-size:17.500px">9: Version Control</text><path d="M655 994h8" stroke="#bbb"/>
<rect x="1757" y="969" width="131" height="31" fill="#2d2f30"/>
<circle cx="1783" cy="986" r="10" fill="#3f9a4c"/><text class="w" x="1779" y="992" style="font-size:14px;font-weight:bold">1</text>
<text class="w" x="1800" y="993" textLength="73" lengthAdjust="spacingAndGlyphs" style="font-size:17.500px">Event Log</text>

<!-- Status bar -->
<rect y="1000" width="1920" height="1.500" fill="#4c4e4f"/>
<path d="M13 1012h14v13H13zM10 1015v13h15" class="ic" stroke-width="1.400"/>
<text x="42" y="1024" textLength="333" lengthAdjust="spacingAndGlyphs">All files are up-to-date (2 minutes ago)</text>
<text x="1593" y="1023.500" textLength="45" lengthAdjust="spacingAndGlyphs">553:1</text>
<text class="d" x="1659" y="1023.500" textLength="18" lengthAdjust="spacingAndGlyphs">LF</text>
<text class="d" x="1696" y="1023.500" textLength="50" lengthAdjust="spacingAndGlyphs">UTF-8</text>
<text x="1770" y="1024" textLength="93" lengthAdjust="spacingAndGlyphs">Git: master</text>
<path d="M1890 1011l3-4h8l3 4zM1887 1011h18v2h-18z" fill="#a8a8a8"/><circle cx="1896" cy="1018" r="5" fill="none" stroke="#a8a8a8" stroke-width="2"/><path d="M1889 1026h15v3h-15z" fill="#a8a8a8"/>

<!-- Taskbar sliver -->
<rect y="1032" width="1920" height="13" fill="#1d2f33"/>
<rect y="1032" width="1920" height="1.500" fill="#0a0a0a"/>
<rect x="463" y="1033.500" width="240" height="12" fill="#4a5f62"/>
<rect x="1913" y="1033.500" width="1" height="12" fill="#8a9a9c"/>
</svg>
</body></html>
